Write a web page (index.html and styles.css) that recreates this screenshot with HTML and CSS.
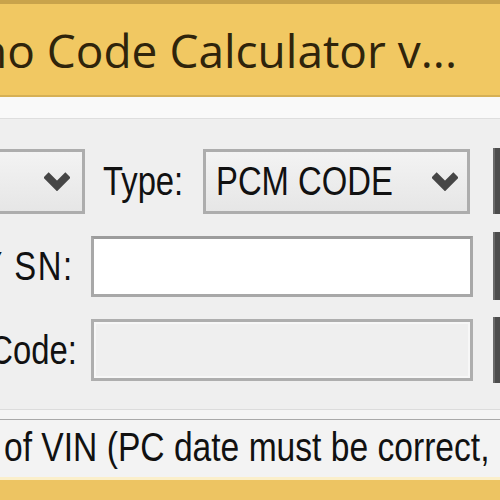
FILE: index.html
```html
<!DOCTYPE html>
<html>
<head>
<meta charset="utf-8">
<link rel="stylesheet" href="styles.css">
</head>
<body>
<div class="window">
  <header class="titlebar"><span class="title">no Code Calculator v...</span></header>
  <div class="topstrip"></div>
  <main class="form">
    <div class="row row-type">
      <div class="combo combo-left">
        <span class="combo-text"></span>
        <svg class="chev" viewBox="0 0 26 20" width="26" height="20"><polyline points="2,4 13,15 24,4" fill="none" stroke="#464646" stroke-width="7.5"/></svg>
      </div>
      <label class="lbl lbl-type"><span class="nar">Type:</span></label>
      <div class="combo combo-type">
        <span class="combo-text"><span class="nar">PCM CODE</span></span>
        <svg class="chev" viewBox="0 0 26 20" width="26" height="20"><polyline points="2,4 13,15 24,4" fill="none" stroke="#464646" stroke-width="7.5"/></svg>
      </div>
      <div class="sidebtn"></div>
    </div>
    <div class="row row-sn">
      <label class="lbl lbl-right lbl-sn"><span class="nar nar-r">Y SN:</span></label>
      <div class="textbox"></div>
      <div class="sidebtn"></div>
    </div>
    <div class="row row-code">
      <label class="lbl lbl-right lbl-code"><span class="nar nar-r">Code:</span></label>
      <div class="textbox textbox-disabled"></div>
      <div class="sidebtn"></div>
    </div>
  </main>
  <div class="sep"></div>
  <footer class="status"><span class="status-text nar">of VIN (PC date must be correct,</span></footer>
  <div class="taskbar"></div>
</div>
</body>
</html>
```

FILE: styles.css
```css
html, body {
  margin: 0;
  padding: 0;
}
body {
  width: 500px;
  height: 500px;
  overflow: hidden;
  background: #f0f0f0;
}
.window {
  display: flex;
  flex-direction: column;
  width: 500px;
  height: 500px;
  font-family: "Liberation Sans", Arial, sans-serif;
  font-size: 40px;
  color: #111;
}
.nar {
  display: inline-block;
  transform: scaleX(0.82);
  transform-origin: left center;
}
.nar-r {
  transform-origin: right center;
}
.titlebar {
  box-sizing: border-box;
  height: 97px;
  flex: none;
  background: #f1c862;
  border-top: 4px solid #c9a34b;
  border-bottom: 2px solid #d6b055;
  padding-top: 22px;
  white-space: nowrap;
  overflow: hidden;
}
.title {
  display: block;
  margin-left: -21px;
  font-family: "Open Sans", "Noto Sans", sans-serif;
  font-size: 46px;
  line-height: 48px;
  color: #2f240b;
}
.topstrip {
  box-sizing: border-box;
  height: 22px;
  flex: none;
  background: #f9f9f9;
  border-bottom: 1px solid #dedede;
}
.form {
  box-sizing: border-box;
  height: 290px;
  flex: none;
  padding-top: 29px;
  display: flex;
  flex-direction: column;
  background: #efefef;
}
.row {
  display: flex;
  align-items: center;
  white-space: nowrap;
}
.row-type {
  height: 66px;
}
.row-sn {
  height: 68px;
  margin-top: 18px;
}
.row-code {
  height: 66px;
  margin-top: 17px;
}
.combo {
  box-sizing: border-box;
  height: 65px;
  flex: none;
  display: flex;
  align-items: center;
  border: 3px solid #adadad;
  background: linear-gradient(#f3f3f3, #e6e6e6);
  padding-right: 12px;
}
.combo-left {
  width: 185px;
  margin-left: -100px;
}
.combo-type {
  width: 267px;
  padding-left: 10px;
}
.combo-text {
  flex: 1;
  line-height: 44px;
}
.chev {
  flex: none;
  display: block;
}
.lbl {
  line-height: 44px;
  flex: none;
}
.lbl-type {
  width: 100px;
  margin-left: 18px;
}
.lbl-right {
  display: flex;
  justify-content: flex-end;
}
.lbl-sn {
  width: 74px;
  letter-spacing: 2px;
}
.lbl-code {
  width: 77px;
}
.textbox {
  box-sizing: border-box;
  width: 382px;
  height: 61px;
  flex: none;
  border: 3px solid #a8a8a8;
  border-top-color: #9c9c9c;
  background: #ffffff;
}
.row-sn .textbox {
  margin-left: 17px;
}
.row-code .textbox {
  margin-left: 14px;
}
.textbox-disabled {
  height: 62px;
  background: #efefef;
  border-color: #aeaeae;
  box-shadow: inset 0 0 0 2px #f7f7f7;
}
.sidebtn {
  box-sizing: border-box;
  width: 20px;
  height: 100%;
  flex: none;
  background: #4c4c4c;
  border-left: 2px solid #6a6a6a;
}
.row-type .sidebtn {
  margin-left: 23px;
}
.row-sn .sidebtn,
.row-code .sidebtn {
  margin-left: 20px;
}
.sep {
  box-sizing: border-box;
  height: 11px;
  flex: none;
  background: #f5f5f5;
  border-top: 1px solid #dcdcdc;
  border-bottom: 1px solid #a9a9a9;
}
.status {
  box-sizing: border-box;
  height: 60px;
  flex: none;
  display: flex;
  align-items: center;
  padding-bottom: 3px;
  background: #f3f3f3;
  border-bottom: 3px solid #fbefcb;
  white-space: nowrap;
  overflow: hidden;
}
.status-text {
  margin-left: 4px;
  line-height: 44px;
  transform: scaleX(0.84);
}
.taskbar {
  flex: 1;
  background: #edc462;
}
```
